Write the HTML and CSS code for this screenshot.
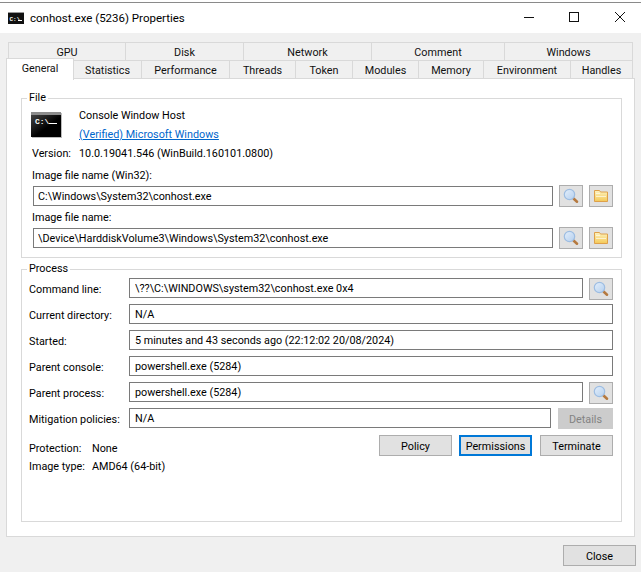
FILE: index.html
```html
<!DOCTYPE html>
<html lang="en">
<head>
    <meta charset="UTF-8">
    <meta name="viewport" content="width=device-width, initial-scale=1.0">
    <title>conhost.exe (5236) Properties</title>
    <link rel="stylesheet" href="styles.css">
</head>
<body>
    <svg class="defs" width="0" height="0">
        <defs>
            <linearGradient id="lens" x1="0" y1="0" x2="1" y2="1">
                <stop offset="0" stop-color="#e4effb"/>
                <stop offset="1" stop-color="#b4cfee"/>
            </linearGradient>
            <linearGradient id="folder" x1="0" y1="0" x2="0" y2="1">
                <stop offset="0" stop-color="#fdf3c0"/>
                <stop offset="1" stop-color="#f4c957"/>
            </linearGradient>
            <linearGradient id="screen" x1="0" y1="0" x2="1" y2="1">
                <stop offset="0" stop-color="#444"/>
                <stop offset="0.55" stop-color="#000"/>
            </linearGradient>
            <symbol id="i-search" viewBox="0 0 16 16">
                <path d="M10.5 10.5l3.5 3.2" stroke="#b5793f" stroke-width="2.6" stroke-linecap="round"/>
                <circle cx="6.5" cy="6.5" r="5.2" fill="url(#lens)" stroke="#9dbde2" stroke-width="1.2"/>
            </symbol>
            <symbol id="i-folder" viewBox="0 0 16 16">
                <path d="M1.5 2.5h5l1 1.5h7v9.5h-13z" fill="url(#folder)" stroke="#dea04a"/>
                <path d="M3 5h4v1H3zM3 8h10v1H3z" fill="#fff" opacity=".6"/>
            </symbol>
        </defs>
    </svg>

    <div class="behind"><span>Disk</span><span>Firewall</span><span>Devices</span></div>

    <div class="window">
        <header class="titlebar">
            <svg class="title-icon" width="16" height="12" viewBox="0 0 16 12">
                <rect width="16" height="12" fill="#111"/>
                <rect width="16" height="1" fill="#999"/>
                <text x="1.5" y="8.5" class="con-text-small">C:\</text>
                <rect x="10" y="8" width="4" height="1" fill="#fff"/>
            </svg>
            <span class="title-text">conhost.exe (5236) Properties</span>
            <div class="win-controls">
                <svg width="10" height="10" viewBox="0 0 10 10"><path d="M0 5.5h10" stroke="#111"/></svg>
                <svg width="10" height="10" viewBox="0 0 10 10"><rect x=".5" y=".5" width="9" height="9" fill="none" stroke="#111"/></svg>
                <svg width="10" height="10" viewBox="0 0 10 10"><path d="M0 0l10 10M10 0L0 10" stroke="#111"/></svg>
            </div>
        </header>

        <div class="body">
            <nav class="tabs">
                <div class="tab-row tab-row-top">
                    <div class="tab">GPU</div>
                    <div class="tab">Disk</div>
                    <div class="tab">Network</div>
                    <div class="tab">Comment</div>
                    <div class="tab">Windows</div>
                </div>
                <div class="tab-row tab-row-bottom">
                    <div class="tab active">General</div>
                    <div class="tab">Statistics</div>
                    <div class="tab">Performance</div>
                    <div class="tab">Threads</div>
                    <div class="tab">Token</div>
                    <div class="tab">Modules</div>
                    <div class="tab">Memory</div>
                    <div class="tab">Environment</div>
                    <div class="tab">Handles</div>
                </div>
            </nav>

            <main class="panel">
                <fieldset class="group group-file">
                    <legend>File</legend>
                    <div class="file-head">
                        <svg class="file-icon" width="31" height="26" viewBox="0 0 31 26">
                            <rect x="1" y="1" width="30" height="25" fill="#bbb"/>
                            <rect width="30" height="25" fill="#8d8d8d"/>
                            <rect y="3" width="30" height="22" fill="url(#screen)"/>
                            <text x="4" y="12" class="con-text">C:\</text>
                            <rect x="18" y="11" width="8" height="1" fill="#fff"/>
                        </svg>
                        <div class="file-desc">
                            <div>Console Window Host</div>
                            <a class="verified" href="#">(Verified) Microsoft Windows</a>
                        </div>
                    </div>
                    <div class="version"><span class="version-label">Version:</span><span>10.0.19041.546 (WinBuild.160101.0800)</span></div>

                    <div class="file-label file-label-first">Image file name (Win32):</div>
                    <div class="file-row">
                        <input class="field" readonly value="C:\Windows\System32\conhost.exe">
                        <button class="icon-btn"><svg width="16" height="16"><use href="#i-search"/></svg></button>
                        <button class="icon-btn"><svg width="16" height="16"><use href="#i-folder"/></svg></button>
                    </div>
                    <div class="file-label">Image file name:</div>
                    <div class="file-row">
                        <input class="field" readonly value="\Device\HarddiskVolume3\Windows\System32\conhost.exe">
                        <button class="icon-btn"><svg width="16" height="16"><use href="#i-search"/></svg></button>
                        <button class="icon-btn"><svg width="16" height="16"><use href="#i-folder"/></svg></button>
                    </div>
                </fieldset>

                <fieldset class="group group-process">
                    <legend>Process</legend>
                    <div class="row">
                        <label>Command line:</label>
                        <input class="field" readonly value="\??\C:\WINDOWS\system32\conhost.exe 0x4">
                        <button class="icon-btn"><svg width="16" height="16"><use href="#i-search"/></svg></button>
                    </div>
                    <div class="row">
                        <label>Current directory:</label>
                        <input class="field" readonly value="N/A">
                    </div>
                    <div class="row">
                        <label>Started:</label>
                        <input class="field" readonly value="5 minutes and 43 seconds ago (22:12:02 20/08/2024)">
                    </div>
                    <div class="row">
                        <label>Parent console:</label>
                        <input class="field" readonly value="powershell.exe (5284)">
                    </div>
                    <div class="row">
                        <label>Parent process:</label>
                        <input class="field" readonly value="powershell.exe (5284)">
                        <button class="icon-btn"><svg width="16" height="16"><use href="#i-search"/></svg></button>
                    </div>
                    <div class="row">
                        <label>Mitigation policies:</label>
                        <input class="field" readonly value="N/A">
                        <button class="btn btn-details" disabled>Details</button>
                    </div>
                    <div class="process-foot">
                        <div class="process-info">
                            <div><span class="info-label">Protection:</span>None</div>
                            <div><span class="info-label">Image type:</span>AMD64 (64-bit)</div>
                        </div>
                        <div class="process-actions">
                            <button class="btn">Policy</button>
                            <button class="btn btn-focus">Permissions</button>
                            <button class="btn">Terminate</button>
                        </div>
                    </div>
                </fieldset>
            </main>

            <footer class="dialog-foot">
                <button class="btn">Close</button>
            </footer>
        </div>
    </div>
</body>
</html>
```

FILE: styles.css
```css
/* page */
html, body {
    margin: 0;
    padding: 0;
    height: 572px;
    overflow: hidden;
}

body {
    font-family: Roboto, "Noto Sans", Arial, sans-serif;
    font-size: 10.8px;
    color: #000;
    background: #f0f0f0;
}

.defs {
    position: absolute;
}

/* window behind, only its last pixels show */
.behind {
    height: 2px;
    overflow: hidden;
    background: #fff;
    display: flex;
    gap: 26px;
    padding-left: 18px;
    font-size: 12px;
    line-height: 2px;
    color: #333;
}

.behind span {
    margin-top: -6px;
}

.window {
    border-top: 1px solid #8a8a8a;
}

/* title bar */
.titlebar {
    height: 30px;
    background: #fff;
    display: flex;
    align-items: center;
    padding-left: 8px;
}

.title-icon {
    margin-right: 6px;
}

.title-text {
    font-size: 11.5px;
}

.con-text-small {
    font-family: "Liberation Mono", monospace;
    font-size: 6px;
    font-weight: bold;
    fill: #fff;
}

.con-text {
    font-family: "Liberation Mono", monospace;
    font-size: 8px;
    font-weight: bold;
    fill: #fff;
}

.win-controls {
    margin-left: auto;
    display: flex;
    gap: 35px;
    padding: 0 16px 2px 0;
}

.win-controls svg:last-child {
    margin-left: 1px;
}

/* tabs */
.body {
    padding: 9px 0 0 6px;
}

.tab-row {
    display: grid;
    grid-template-rows: 18px;
    height: 18px;
}

.tab-row-top {
    margin-left: 2px;
    width: 625px;
    grid-template-columns: 118px 118px 128px 133px 128px;
}

.tab-row-bottom {
    width: 627px;
    grid-template-columns: 68px 68px 88px 66px 57px 66px 65px 87px 62px;
}

.tab {
    box-sizing: border-box;
    border: 1px solid #d9d9d9;
    border-left: 0;
    border-bottom: 0;
    background: #f0f0f0;
    text-align: center;
    line-height: 18px;
    padding-top: 1px;
    color: #111;
}

.tab-row-top .tab:first-child {
    border-left: 1px solid #d9d9d9;
}

.tab.active {
    position: relative;
    z-index: 1;
    height: 22px;
    margin-top: -2px;
    background: #fff;
    border-left: 1px solid #d9d9d9;
    border-right: 1px solid #d9d9d9;
    line-height: 19px;
    padding-top: 0;
}

/* main panel */
.panel {
    box-sizing: border-box;
    width: 629px;
    height: 459px;
    background: #fff;
    border: 1px solid #d9d9d9;
    padding: 11px 12px 14px 14px;
    display: flex;
    flex-direction: column;
}

.group {
    margin: 0;
    min-width: 0;
    border: 1px solid #d9d9d9;
}

.group legend {
    padding: 0 2px;
    line-height: 16px;
}

.group-file {
    padding: 6px 8px 8px 10px;
}

.group-file legend {
    margin-left: -5px;
}

.group-process {
    flex: 1;
    margin-top: 3px;
    padding: 1px 8px 0 7px;
}

.group-process legend {
    margin-left: -2px;
}

.file-head {
    display: flex;
    height: 32px;
}

.file-icon {
    margin: 0 17px 0 -1px;
}

.file-desc {
    line-height: 19px;
    margin-top: -6px;
}

.verified {
    color: #0066cc;
}

.version {
    line-height: 16px;
    margin-top: 2px;
    display: flex;
}

.version-label {
    width: 47px;
}

.file-label {
    line-height: 17px;
    margin-top: 2px;
}

.file-label-first {
    margin-top: 5px;
}

.file-row {
    display: flex;
    align-items: center;
    gap: 6px;
    margin-top: 1px;
    padding-left: 1px;
}

.field {
    box-sizing: border-box;
    flex: 1;
    min-width: 0;
    height: 20px;
    border: 1px solid #7a7a7a;
    border-radius: 0;
    outline: 0;
    background: #fff;
    color: #000;
    font: inherit;
    padding: 0 4px;
}

.row .field {
    padding: 0 5px;
}

.icon-btn {
    box-sizing: border-box;
    flex: none;
    width: 24px;
    height: 22px;
    padding: 0;
    background: #e1e1e1;
    border: 1px solid #adadad;
    display: flex;
    align-items: center;
    justify-content: center;
}

/* process rows */
.row {
    display: flex;
    align-items: flex-start;
    gap: 6px;
    height: 26px;
}

.row label {
    flex: none;
    width: 94px;
    line-height: 20px;
    padding-top: 2px;
    white-space: nowrap;
}

.btn {
    box-sizing: border-box;
    height: 21px;
    width: 73px;
    padding: 1px 0 0;
    background: #e1e1e1;
    border: 1px solid #adadad;
    border-radius: 0;
    color: #000;
    font: inherit;
}

.btn-details {
    width: 55px;
    margin-left: 1px;
    background: #ccc;
    border-color: #ccc;
    color: #838383;
}

.btn-focus {
    border: 2px solid #0078d7;
    margin-right: 1px;
}

.process-foot {
    display: flex;
    justify-content: space-between;
    padding-top: 1px;
}

.process-info {
    line-height: 18px;
    padding-top: 5px;
    white-space: nowrap;
}

.info-label {
    display: inline-block;
    width: 63px;
}

.process-actions {
    display: flex;
    gap: 7px;
}

/* bottom of the dialog */
.dialog-foot {
    display: flex;
    justify-content: flex-end;
    padding: 8px 5px 0 0;
}
```
